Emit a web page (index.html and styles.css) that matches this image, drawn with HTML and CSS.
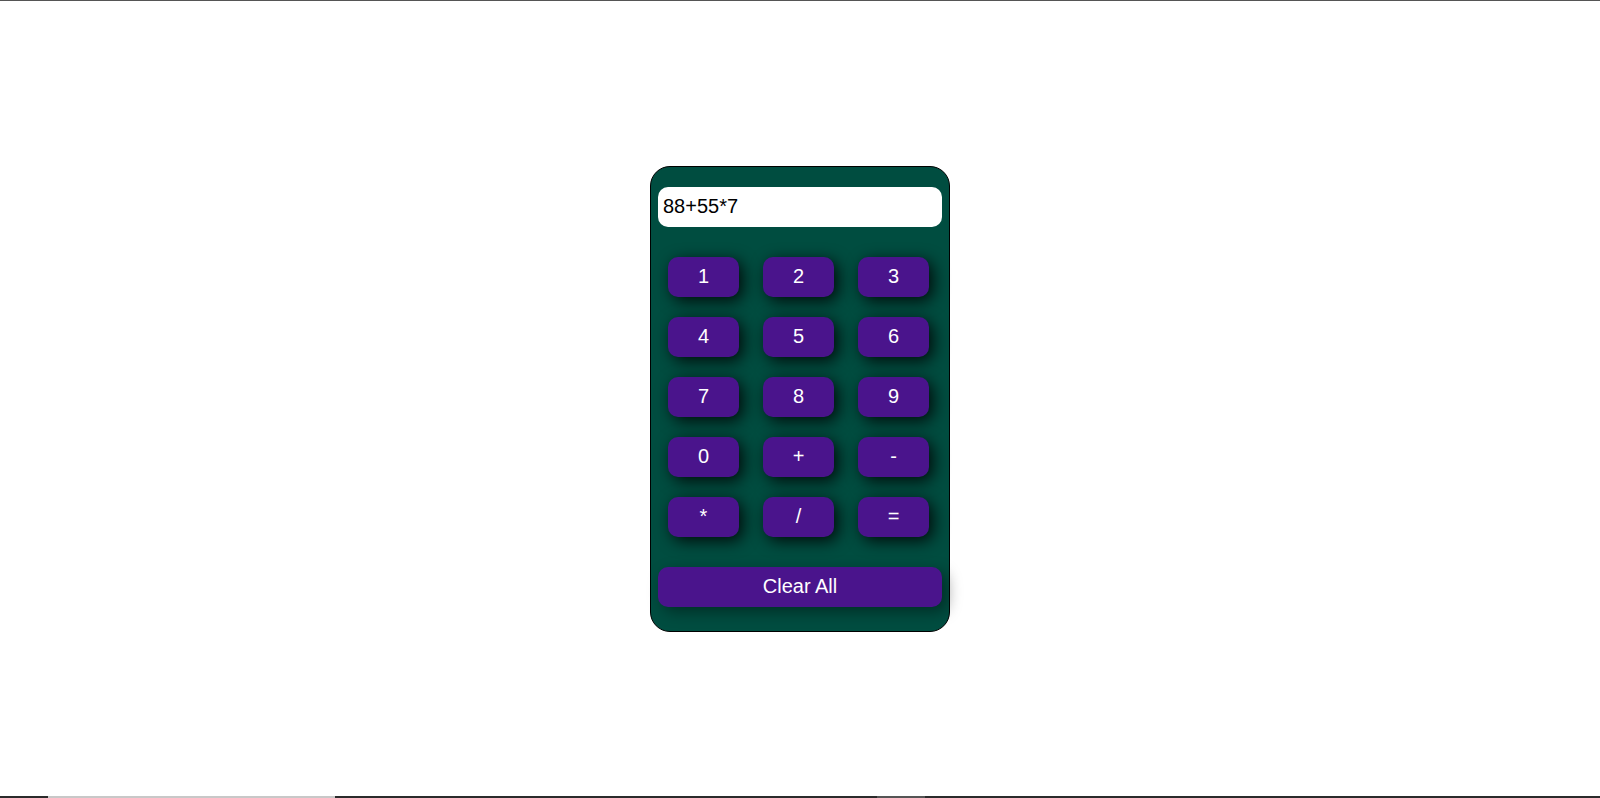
FILE: index.html
```html
<!DOCTYPE html>
<html lang="en">
<head>
<meta charset="UTF-8">
<title>Calculator</title>
<link rel="stylesheet" href="styles.css">
</head>
<body>
<div class="topline"></div>
<main class="stage">
  <div class="calc">
    <input class="display" type="text" value="88+55*7" readonly>
    <div class="keys">
      <button class="key">1</button>
      <button class="key">2</button>
      <button class="key">3</button>
      <button class="key">4</button>
      <button class="key">5</button>
      <button class="key">6</button>
      <button class="key">7</button>
      <button class="key">8</button>
      <button class="key">9</button>
      <button class="key">0</button>
      <button class="key">+</button>
      <button class="key">-</button>
      <button class="key">*</button>
      <button class="key">/</button>
      <button class="key">=</button>
    </div>
    <button class="clear">Clear All</button>
  </div>
</main>
<div class="bottombar">
  <span class="seg dark s1"></span>
  <span class="seg light s2"></span>
  <span class="seg dark s3"></span>
  <span class="seg mid s4"></span>
  <span class="seg dark s5"></span>
</div>
</body>
</html>
```
FILE: styles.css
```css
html, body {
  margin: 0;
  padding: 0;
  height: 100%;
}
body {
  display: flex;
  flex-direction: column;
  background: #ffffff;
  font-family: "Liberation Sans", Arial, sans-serif;
}
.topline {
  height: 1px;
  background: #555555;
  flex: none;
}
.stage {
  flex: 1;
  display: flex;
  align-items: center;
  justify-content: center;
}
.calc {
  width: 284px;
  padding: 20px 7px 24px 7px;
  border: 1px solid #000000;
  border-radius: 20px;
  background: #004d40;
  display: flex;
  flex-direction: column;
}
.display {
  display: block;
  width: 284px;
  height: 40px;
  box-sizing: border-box;
  border: none;
  outline: none;
  border-radius: 10px;
  background: #ffffff;
  color: #000000;
  font-family: "Liberation Sans", Arial, sans-serif;
  font-size: 20px;
  padding: 0 5px;
  margin: 0;
}
.keys {
  display: grid;
  grid-template-columns: repeat(3, 71px);
  grid-auto-rows: 40px;
  column-gap: 24px;
  row-gap: 20px;
  margin: 30px 0 30px 10px;
}
.key, .clear {
  border: none;
  border-radius: 10px;
  background: #4a148c;
  color: #ffffff;
  font-family: "Liberation Sans", Arial, sans-serif;
  font-size: 20px;
  padding: 0;
  margin: 0;
  cursor: pointer;
}
.key {
  box-shadow: 4px 4px 16px rgba(0, 0, 0, 0.85);
}
.clear {
  width: 284px;
  height: 40px;
  box-shadow: 5px 5px 15px rgba(0, 0, 0, 0.4);
}
.bottombar {
  height: 2px;
  flex: none;
  display: flex;
}
.seg { display: block; height: 2px; }
.dark { background: #2b2b2b; }
.light { background: #c8c8c8; }
.mid { background: #555555; }
.s1 { width: 48px; }
.s2 { width: 287px; }
.s3 { width: 542px; }
.s4 { width: 48px; }
.s5 { flex: 1; }
```
